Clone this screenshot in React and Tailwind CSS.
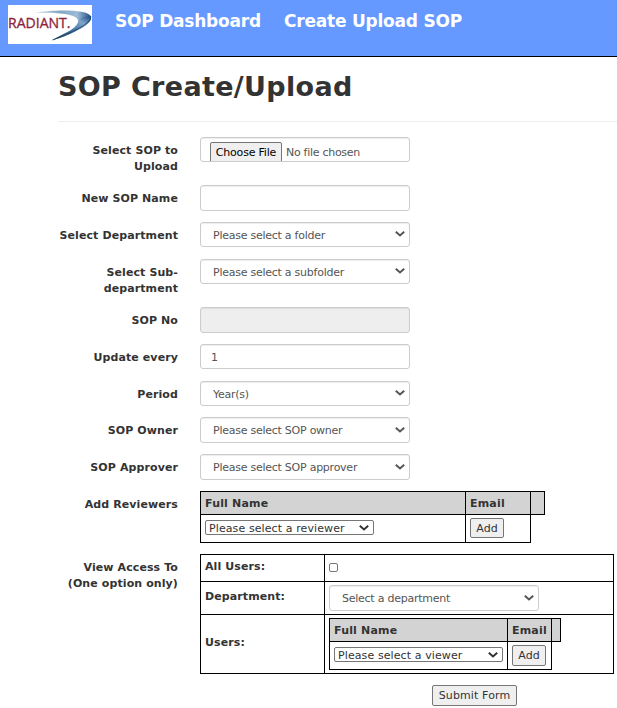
import React from "react";

function Chevron({ className = "" }) {
  return (
    <svg className={`shrink-0 ${className}`} width="10" height="6" viewBox="0 0 10 6" fill="none" stroke="currentColor" strokeWidth="2">
      <path d="M0.8 0.8L5 4.4L9.2 0.8" />
    </svg>
  );
}

function Row({ label, height, children }) {
  return (
    <div className={`flex ${height}`}>
      <div className="w-[178px] shrink-0 whitespace-pre-line pt-[6px] text-right font-bold leading-4 tracking-[0.1px]">
        {label}
      </div>
      <div className="ml-[22px]">{children}</div>
    </div>
  );
}

const field = "flex w-[210px] items-center rounded-[3px] border border-[#ccc] text-[#555] shadow-[inset_0_1px_1px_rgba(0,0,0,0.075)]";

function SelectField({ text, height = "h-[25px]" }) {
  return (
    <div className={`${field} ${height} justify-between bg-white pl-3 pr-1`}>
      <span className="pt-[2px] leading-4 tracking-[-0.25px]">{text}</span>
      <Chevron className="mb-px" />
    </div>
  );
}

function SmallSelect({ text }) {
  return (
    <div className="flex h-[15px] w-[169px] items-center justify-between rounded-[2px] border border-[#767676] bg-white pl-[3px] pr-[4px] text-[#333]">
      <span className="pt-px leading-[13px] tracking-[0.1px]">{text}</span>
      <Chevron />
    </div>
  );
}

function Button({ children, className }) {
  return (
    <button className={`flex items-center justify-center rounded-[2px] border border-[#767676] bg-[#efefef] leading-4 text-[#333] ${className}`}>
      {children}
    </button>
  );
}

function PeopleTable({ nameWidth, emailWidth, endWidth, placeholder, buttonHeight }) {
  return (
    <div className="flex flex-col items-start">
      <div className="flex h-6 border-y border-r border-black bg-[#d3d3d3] font-bold leading-[24px] tracking-[0.18px]">
        <div className={`h-[22px] border-l border-black pl-1 ${nameWidth}`}>Full Name</div>
        <div className={`h-[22px] border-l border-black pl-1 ${emailWidth}`}>Email</div>
        <div className={`border-l border-black ${endWidth}`} />
      </div>
      <div className="flex h-7 border-b border-r border-black">
        <div className={`border-l border-black pl-1 pt-[5px] ${nameWidth}`}>
          <SmallSelect text={placeholder} />
        </div>
        <div className={`border-l border-black pl-1 pt-[3px] ${emailWidth}`}>
          <Button className={`w-[34px] ${buttonHeight}`}>
            <span className="pt-px">Add</span>
          </Button>
        </div>
      </div>
    </div>
  );
}

function Logo() {
  return (
    <svg className="mt-[5px] ml-2 block shrink-0" width="84" height="39" viewBox="0 0 84 39">
      <defs>
        <linearGradient id="swoosh" x1="0" y1="0" x2="1" y2="0">
          <stop offset="0" stopColor="#d5e2eb" />
          <stop offset="0.45" stopColor="#7fa5c2" />
          <stop offset="0.75" stopColor="#9dbcd8" />
          <stop offset="1" stopColor="#1f4c80" />
        </linearGradient>
        <linearGradient id="tail" x1="0" y1="1" x2="1" y2="0">
          <stop offset="0" stopColor="#1d4266" />
          <stop offset="0.5" stopColor="#4a7aa8" />
          <stop offset="0.75" stopColor="#7fa5cb" />
          <stop offset="1" stopColor="#1d4a80" />
        </linearGradient>
      </defs>
      <rect width="84" height="39" fill="#fff" />
      <path d="M27 7.700C42 5 80 3.500 83 11.500C84 17 76 22.500 63 28.500C68 24 71.500 18 69.500 14C66 8.500 48 7.300 27 7.700Z" fill="url(#swoosh)" />
      <path d="M44.500 35C53 29.500 67 25 70 17.500C71 13 76 11 83 11.500C84 17 77 21.500 68 26C60 30 52 33.500 44.500 35Z" fill="url(#tail)" />
      <path d="M82.800 11.500C83 17 74 22 64.500 26.500C57 30 51 32.500 44.500 35" fill="none" stroke="#1d4266" strokeWidth="0.900" />
      <text x="0" y="23.400" fontFamily="'Open Sans', sans-serif" fontSize="15" fill="#8f1f3c" stroke="#8f1f3c" strokeWidth="0.350" textLength="62.500" lengthAdjust="spacingAndGlyphs">RADIANT.</text>
    </svg>
  );
}

export default function App() {
  return (
    <div className="h-[708px] w-[617px] overflow-hidden bg-white font-['Verdana','DejaVu_Sans',sans-serif] text-[11px] text-[#333]">
      <header className="flex h-[57px] border-b border-black bg-[#6699ff] text-white">
        <Logo />
        <nav className="flex pt-[9px] text-[17px] font-bold leading-6 tracking-[-0.22px]">
          <a className="ml-[23px] w-[169px] whitespace-nowrap">SOP Dashboard</a>
          <a className="whitespace-nowrap">Create Upload SOP</a>
        </nav>
      </header>
      <div className="ml-[58px] h-[65px] border-b border-[#eee]">
        <h1 className="pt-3 text-[27px] font-bold leading-9 tracking-[0.34px] whitespace-nowrap">SOP Create/Upload</h1>
      </div>
      <main className="pt-[15px]">
        <Row label={"Select SOP to\nUpload"} height="h-12">
          <div className="flex h-[25px] w-[210px] items-start overflow-hidden rounded-[3px] border border-[#ccc] bg-white pl-[9px] pt-1 text-[#555] shadow-[inset_0_1px_1px_rgba(0,0,0,0.075)]">
            <span className="flex h-[22px] w-[72px] shrink-0 justify-center whitespace-nowrap rounded-[2px] border border-[#767676] bg-[#efefef] leading-[19px] tracking-[-0.2px] text-black">
              Choose File
            </span>
            <span className="ml-1 leading-[21px] tracking-[-0.28px]">No file chosen</span>
          </div>
        </Row>
        <Row label="New SOP Name" height="h-[37px]">
          <div className={`${field} h-[26px] bg-white`} />
        </Row>
        <Row label="Select Department" height="h-[37px]">
          <SelectField text="Please select a folder" />
        </Row>
        <Row label={"Select Sub-\ndepartment"} height="h-12">
          <SelectField text="Please select a subfolder" />
        </Row>
        <Row label="SOP No" height="h-[37px]">
          <div className={`${field} h-[26px] bg-[#eee]`} />
        </Row>
        <Row label="Update every" height="h-[37px]">
          <div className={`${field} h-[25px] bg-white pl-[10px]`}>
            <span className="pt-[2px] leading-4">1</span>
          </div>
        </Row>
        <Row label="Period" height="h-9">
          <SelectField text="Year(s)" />
        </Row>
        <Row label="SOP Owner" height="h-[37px]">
          <SelectField text="Please select SOP owner" height="h-[26px]" />
        </Row>
        <Row label="SOP Approver" height="h-[37px]">
          <SelectField text="Please select SOP approver" height="h-[26px]" />
        </Row>
        <Row label="Add Reviewers" height="h-[63px]">
          <PeopleTable nameWidth="w-[265px]" emailWidth="w-[65px]" endWidth="w-[14px]" placeholder="Please select a reviewer" buttonHeight="h-5" />
        </Row>
        <Row label={"View Access To\n(One option only)"} height="h-[131px]">
          <div className="w-[414px] border border-black">
            <div className="flex h-[27px] border-b border-black">
              <div className="w-[124px] border-r border-black pl-1 font-bold leading-[24px] tracking-[0.1px]">All Users:</div>
              <div className="pl-1 pt-2">
                <div className="h-[9px] w-[9px] rounded-[2px] border border-[#767676] bg-white" />
              </div>
            </div>
            <div className="flex h-[33px] border-b border-black">
              <div className="w-[124px] border-r border-black pl-1 font-bold leading-[30px] tracking-[0.1px]">Department:</div>
              <div className="pl-1 pt-[3px]">
                <SelectField text="Select a department" height="h-[26px]" />
              </div>
            </div>
            <div className="flex h-[58px]">
              <div className="flex w-[124px] items-center border-r border-black pl-1 pb-[2px] font-bold tracking-[0.1px]">Users:</div>
              <div className="pl-1 pt-[3px]">
                <PeopleTable nameWidth="w-[178px]" emailWidth="w-11" endWidth="w-[9px]" placeholder="Please select a viewer" buttonHeight="h-[21px]" />
              </div>
            </div>
          </div>
        </Row>
        <Button className="ml-[432px] h-[21px] w-[85px]">
          <span className="whitespace-nowrap pt-px tracking-[0.12px]">Submit Form</span>
        </Button>
      </main>
    </div>
  );
}
